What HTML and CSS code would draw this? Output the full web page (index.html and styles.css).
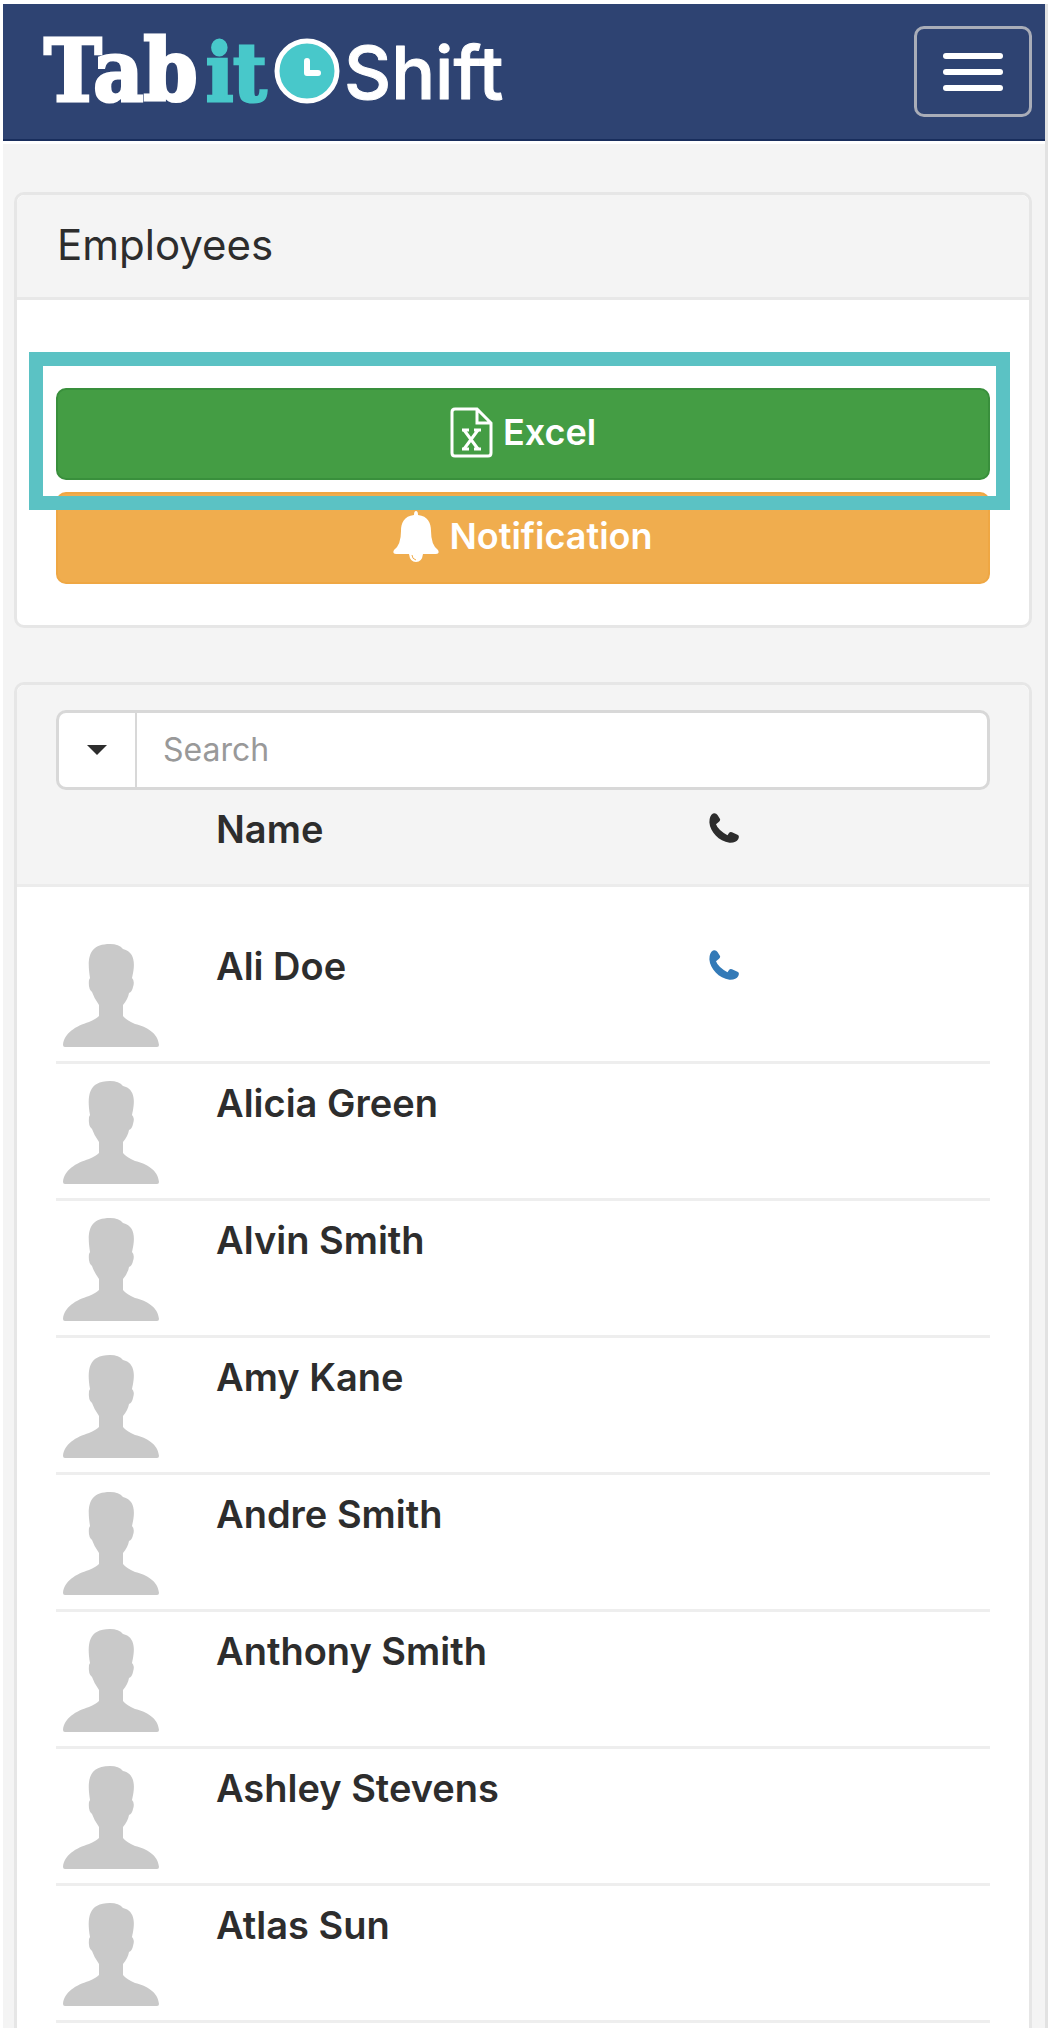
FILE: index.html
```
<!DOCTYPE html>
<html lang="en">
<head>
    <meta charset="UTF-8">
    <meta name="viewport" content="width=device-width, initial-scale=1.0">
    <title>Tabit Shift - Employees</title>
    <link rel="stylesheet" href="styles.css">
</head>
<body>
    <!-- shared icons -->
    <svg class="sprite" aria-hidden="true">
        <symbol id="phone" viewBox="0 0 30 30">
            <path d="M4 .5Q7-.3 8.500 2L11 6Q11.500 7.300 10 8.700L7 11.300Q9 17 18.500 22.300L20 20Q21 18.600 23 19.200L29 22Q30.600 23.300 29.300 26Q27 30 20.500 29.700C10 28.500 1 18.500 .4 9.500Q.3 2.500 4 .5Z"/>
        </symbol>
        <symbol id="person" viewBox="0 0 96 103">
            <path d="M0 101C1 89 13 82 26 78Q33 75 36 72V61Q31 54 29 48Q25 45 26 36L27 34C24 15 25 0 47 0Q56 0 60 5C73 8 72 22 69 34Q72 37 70 43Q69 48 66 49Q65 55 60 61V72Q63 76 72 80C84 83 95 89 96 101Q96 103 94 103H2Q0 103 0 101Z"/>
        </symbol>
    </svg>

    <header class="navbar">
        <a href="#" class="brand" aria-label="Tabit Shift">
            <svg class="logo" viewBox="0 0 480 111">
                <text class="logo-tab" x="3" y="85">Tab</text>
                <text class="logo-it" x="165" y="85">it</text>
                <circle cx="266" cy="55" r="30" fill="#48c8ca" stroke="#fff" stroke-width="5"/>
                <path d="M266 45V57H277" fill="none" stroke="#fff" stroke-width="6" stroke-linecap="round" stroke-linejoin="round"/>
                <text class="logo-shift" x="303" y="83">Shift</text>
            </svg>
        </a>
        <button class="toggle" aria-label="Menu">
            <span class="bar"></span>
            <span class="bar"></span>
            <span class="bar"></span>
        </button>
    </header>

    <main>
        <section class="panel">
            <h1 class="panel-title">Employees</h1>
            <div class="actions">
                <div class="highlight">
                    <button class="btn excel">
                        <svg class="icon-file" viewBox="0 0 43 51">
                            <path d="M5 2H27L41 16V46Q41 49 38 49H5Q2 49 2 46V5Q2 2 5 2ZM27 2V16H41" fill="none" stroke="#fff" stroke-width="3"/>
                            <path d="M14 23L28 42M28 23L14 42" fill="none" stroke="#fff" stroke-width="3"/>
                            <path d="M12 23H19M24 23H31M12 42H19M24 42H31" fill="none" stroke="#fff" stroke-width="3"/>
                        </svg>
                        Excel
                    </button>
                </div>
                <button class="btn notification">
                    <svg class="icon-bell" viewBox="0 0 46 51">
                        <path d="M23 0Q25 0 25 4C35 5 38 12 38 20Q38 34 45 39Q47 43 43 43H30Q29 51 23 51Q17 51 16 43H3Q-1 43 1 39Q8 34 8 20C8 12 11 5 21 4Q21 0 23 0Z" fill="#fff"/>
                        <path d="M19 44Q19 48 23 49" fill="none" stroke="#f0ad4e"/>
                    </svg>
                    Notification
                </button>
            </div>
        </section>

        <section class="panel list">
            <div class="search">
                <button class="filter" aria-label="Filter"><span class="caret"></span></button>
                <input type="text" class="search-input" placeholder="Search" aria-label="Search">
            </div>
            <table class="employees">
                <thead>
                    <tr>
                        <td></td>
                        <th>Name</th>
                        <th><svg class="phone" role="img" aria-label="Phone"><use href="#phone"/></svg></th>
                    </tr>
                </thead>
                <tbody>
                    <tr>
                        <td><svg class="avatar"><use href="#person"/></svg></td>
                        <td>Ali Doe</td>
                        <td><a href="#" class="call" aria-label="Call Ali Doe"><svg class="phone"><use href="#phone"/></svg></a></td>
                    </tr>
                    <tr>
                        <td><svg class="avatar"><use href="#person"/></svg></td>
                        <td>Alicia Green</td>
                        <td></td>
                    </tr>
                    <tr>
                        <td><svg class="avatar"><use href="#person"/></svg></td>
                        <td>Alvin Smith</td>
                        <td></td>
                    </tr>
                    <tr>
                        <td><svg class="avatar"><use href="#person"/></svg></td>
                        <td>Amy Kane</td>
                        <td></td>
                    </tr>
                    <tr>
                        <td><svg class="avatar"><use href="#person"/></svg></td>
                        <td>Andre Smith</td>
                        <td></td>
                    </tr>
                    <tr>
                        <td><svg class="avatar"><use href="#person"/></svg></td>
                        <td>Anthony Smith</td>
                        <td></td>
                    </tr>
                    <tr>
                        <td><svg class="avatar"><use href="#person"/></svg></td>
                        <td>Ashley Stevens</td>
                        <td></td>
                    </tr>
                    <tr>
                        <td><svg class="avatar"><use href="#person"/></svg></td>
                        <td>Atlas Sun</td>
                        <td></td>
                    </tr>
                </tbody>
            </table>
        </section>
    </main>
</body>
</html>
```
FILE: styles.css
```
* {
    margin: 0;
    padding: 0;
    box-sizing: border-box;
}

html {
    background-color: #fff;
}

body {
    margin: 4px 1px 4px 3px;
    font-family: Inter, Roboto, sans-serif;
    background-color: #f4f4f4;
    color: #2d2d2d;
    border-right: 3px solid #e2e2e2;
}

button, input {
    font-family: inherit;
}

svg {
    display: block;
}

.sprite {
    width: 0;
    height: 0;
    position: absolute;
}

/* navbar */
.navbar {
    display: flex;
    justify-content: space-between;
    align-items: center;
    padding: 12px 13px 12px 38px;
    background-color: #2e4372;
    border-bottom: 2px solid #182d5c;
    box-shadow: 0 3px #fff;
}

.logo {
    width: 480px;
    height: 111px;
}

.logo-tab, .logo-it {
    font-family: "DejaVu Serif Condensed", "DejaVu Serif", serif;
    font-weight: bold;
    stroke-width: 3px;
}

.logo-tab {
    font-size: 86px;
    fill: #fff;
    stroke: #fff;
}

.logo-it {
    font-size: 80px;
    fill: #48c8ca;
    stroke: #48c8ca;
}

.logo-shift {
    font-size: 73px;
    font-weight: 500;
    fill: #fff;
    stroke: #fff;
    stroke-width: 1px;
    stroke-linejoin: round;
}

.toggle {
    display: flex;
    flex-direction: column;
    justify-content: center;
    align-items: center;
    gap: 10px;
    width: 118px;
    height: 91px;
    background: none;
    border: 3px solid #a9adb8;
    border-radius: 10px;
    cursor: pointer;
}

.bar {
    width: 60px;
    height: 6px;
    border-radius: 3px;
    background-color: #fff;
}

/* panels */
main {
    padding: 51px 13px 0 11px;
}

.panel {
    background-color: #fff;
    border: 3px solid #e6e6e6;
    border-radius: 10px;
    margin-bottom: 54px;
}

.panel-title {
    background-color: #f4f4f4;
    border-bottom: 3px solid #e8e8e8;
    border-radius: 8px 8px 0 0;
    padding: 20px 40px 22px;
    font-size: 42px;
    line-height: 60px;
    font-weight: 400;
}

.actions {
    display: flex;
    flex-direction: column;
    gap: 12px;
    padding: 88px 39px 41px;
}

.btn {
    display: flex;
    justify-content: center;
    align-items: center;
    gap: 10px;
    width: 100%;
    height: 92px;
    padding-bottom: 4px;
    color: #fff;
    font-size: 36px;
    font-weight: 600;
    border-radius: 10px;
    cursor: pointer;
}

.excel {
    background-color: #449d44;
    border: 2px solid #398f3c;
}

.notification {
    background-color: #f0ad4e;
    border: 2px solid #efa743;
}

.icon-file {
    width: 43px;
    height: 51px;
}

.icon-bell {
    width: 46px;
    height: 51px;
}

/* frame drawn over the button it marks */
.highlight {
    position: relative;
}

.highlight::after {
    content: "";
    position: absolute;
    top: -36px;
    right: -20px;
    bottom: -30px;
    left: -27px;
    border: 14px solid #5bc2c4;
    pointer-events: none;
}

/* employee list */
.list {
    margin-bottom: 0;
    border-bottom: none;
    border-radius: 10px 10px 0 0;
}

.search {
    display: flex;
    padding: 25px 39px 0;
    background-color: #f4f4f4;
    border-radius: 8px 8px 0 0;
}

.filter {
    display: flex;
    justify-content: center;
    align-items: center;
    width: 79px;
    background-color: #fff;
    border: 3px solid #d8d8d8;
    border-right: none;
    border-radius: 10px 0 0 10px;
    cursor: pointer;
}

.caret {
    border-top: 10px solid #2d2d2d;
    border-left: 10px solid transparent;
    border-right: 10px solid transparent;
}

.search-input {
    flex: 1;
    min-width: 0;
    height: 80px;
    padding: 0 26px 2px;
    font-size: 32px;
    background-color: #fff;
    border: 3px solid #d8d8d8;
    border-left-width: 2px;
    border-radius: 0 10px 10px 0;
}

.search-input::placeholder {
    color: #999;
}

.employees, thead, tbody {
    display: block;
}

.employees tr {
    display: grid;
    grid-template-columns: 160px 7fr 4fr;
}

.employees th, .employees td {
    font-size: 38px;
    line-height: 44px;
    font-weight: 600;
    text-align: left;
}

thead {
    padding: 17px 39px 33px;
    background-color: #f4f4f4;
    border-bottom: 3px solid #ececec;
}

tbody {
    padding: 40px 39px 5px;
}

tbody tr {
    height: 137px;
    padding-top: 17px;
    border-bottom: 3px solid #eee;
}

.avatar {
    width: 96px;
    height: 103px;
    margin-left: 7px;
    fill: #c9c9c9;
}

.phone {
    width: 30px;
    height: 30px;
    margin-top: 6px;
    fill: #2d2d2d;
}

.call .phone {
    fill: #337ab7;
}
```
